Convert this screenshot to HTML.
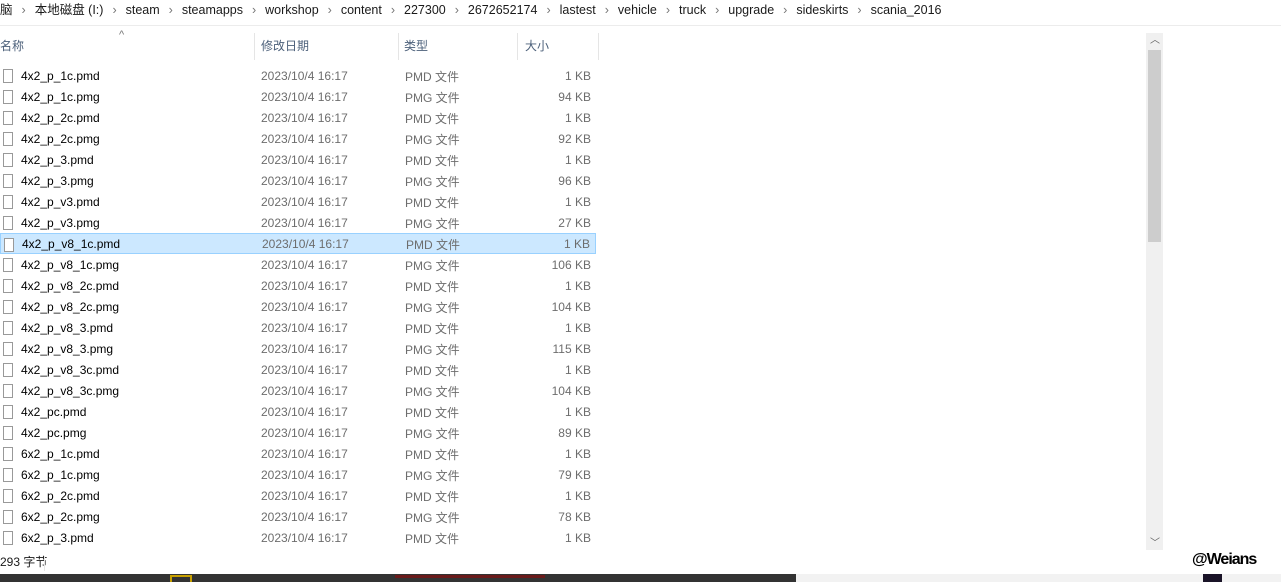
<!DOCTYPE html><html><head><meta charset="utf-8"><style>
body{margin:0;width:1281px;height:582px;overflow:hidden;background:#fff;font-family:"Liberation Sans","Noto Sans CJK SC",sans-serif;font-size:12px;color:#000;position:relative}
.a{position:absolute;white-space:nowrap;line-height:15px}
.bc{top:3px;left:0;font-size:12.5px;color:#1a1a1a}
.bc span{margin:0 9px;color:#777}
.r{position:absolute;left:0;width:596px;height:21px}
.sel{background:#cce8ff;border:1px solid #99d1ff;box-sizing:border-box}
.sel>.a{margin-top:-1px}
.ic{position:absolute;left:3px;top:4px;width:10px;height:14px;border:1px solid #999;background:#fff;box-sizing:border-box}
.n{left:21px;top:4px}.d{left:261px;top:4px;color:#6d6d6d}.t{left:405px;top:5px;color:#6d6d6d}.s{right:5px;top:4px;color:#6d6d6d}
.h{top:39px;color:#4c607a}
.sep{position:absolute;top:33px;width:1px;height:27px;background:#e5e5e5}
</style></head><body>
<div class="a bc">脑<span>›</span>本地磁盘 (I:)<span>›</span>steam<span>›</span>steamapps<span>›</span>workshop<span>›</span>content<span>›</span>227300<span>›</span>2672652174<span>›</span>lastest<span>›</span>vehicle<span>›</span>truck<span>›</span>upgrade<span>›</span>sideskirts<span>›</span>scania_2016</div>
<div class="a" style="top:25px;left:0;width:1281px;height:1px;background:#ececec"></div>
<div class="a" style="top:28px;left:119px;color:#777;font-size:11px">^</div>
<div class="a h" style="left:0">名称</div><div class="a h" style="left:261px">修改日期</div><div class="a h" style="left:404px">类型</div><div class="a h" style="left:525px">大小</div>
<div class="sep" style="left:254px"></div><div class="sep" style="left:398px"></div><div class="sep" style="left:517px"></div><div class="sep" style="left:598px"></div>
<div id="rows"></div>
<div class="a" style="left:1146px;top:33px;width:17px;height:517px;background:#f0f0f0"></div>
<div class="a" style="left:1148px;top:50px;width:13px;height:192px;background:#cdcdcd"></div>
<div class="a" style="left:1150px;top:33px;color:#606060;font-size:10px">︿</div>
<div class="a" style="left:1150px;top:536px;color:#606060;font-size:10px">﹀</div>
<div class="a" style="left:0;top:555px;color:#1a1a1a">293 字节</div>
<div class="a" style="left:44px;top:556px;width:1px;height:15px;background:#e5e5e5"></div>
<div class="a" style="left:1192px;top:552px;font-weight:bold;font-size:16px;letter-spacing:-1px">@Weians</div>
<div class="a" style="left:0;top:574px;width:796px;height:8px;background:#333"></div>
<div class="a" style="left:170px;top:575px;width:22px;height:7px;border:2px solid #c8a000;box-sizing:border-box;border-bottom:none"></div>
<div class="a" style="left:395px;top:575px;width:150px;height:3px;background:#6a1a1a"></div>
<div class="a" style="left:796px;top:574px;width:485px;height:8px;background:#f2f2f2"></div>
<div class="a" style="left:1203px;top:574px;width:19px;height:8px;background:#1a1428"></div>
<script>
var f=["4x2_p_1c.pmd","4x2_p_1c.pmg","4x2_p_2c.pmd","4x2_p_2c.pmg","4x2_p_3.pmd","4x2_p_3.pmg","4x2_p_v3.pmd","4x2_p_v3.pmg","4x2_p_v8_1c.pmd","4x2_p_v8_1c.pmg","4x2_p_v8_2c.pmd","4x2_p_v8_2c.pmg","4x2_p_v8_3.pmd","4x2_p_v8_3.pmg","4x2_p_v8_3c.pmd","4x2_p_v8_3c.pmg","4x2_pc.pmd","4x2_pc.pmg","6x2_p_1c.pmd","6x2_p_1c.pmg","6x2_p_2c.pmd","6x2_p_2c.pmg","6x2_p_3.pmd"];
var s=["1","94","1","92","1","96","1","27","1","106","1","104","1","115","1","104","1","89","1","79","1","78","1"];
var h="";for(var i=0;i<f.length;i++){var y=65+i*21;var m=f[i].slice(-1)=="d";
h+='<div class="r'+(i==8?' sel':'')+'" style="top:'+y+'px"><div class="ic"></div><div class="a n">'+f[i]+'</div><div class="a d">2023/10/4 16:17</div><div class="a t">'+(m?'PMD':'PMG')+' 文件</div><div class="a s">'+s[i]+' KB</div></div>';}
document.getElementById("rows").innerHTML=h;
</script>
</body></html>
